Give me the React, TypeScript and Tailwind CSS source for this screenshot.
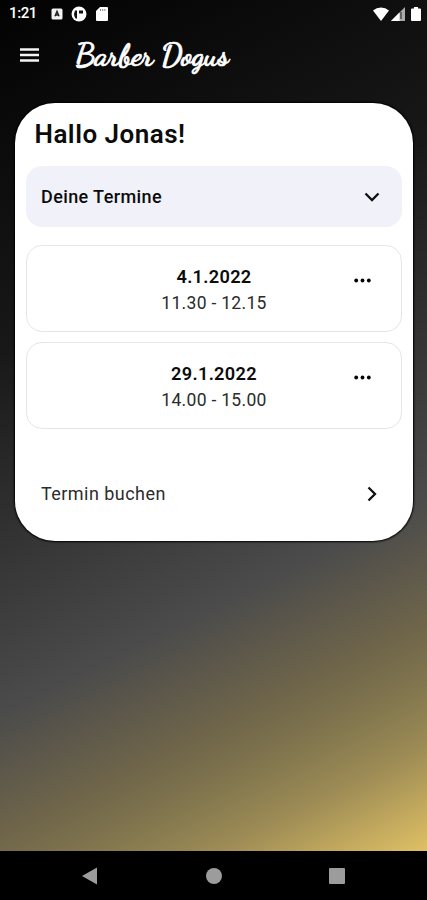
import React, { useState } from "react";

const appointments = [
  { id: 1, date: "4.1.2022", time: "11.30 - 12.15" },
  { id: 2, date: "29.1.2022", time: "14.00 - 15.00" },
];

function StatusBar() {
  return (
    <div className="flex h-[27px] items-center justify-between pl-[9px] pr-[6px] text-white">
      <div className="flex items-center">
        <span className="w-[42px] text-[15px] font-medium leading-none tracking-[-0.4px]">1:21</span>
        <svg className="h-3 w-3" viewBox="0 0 12 12">
          <rect x="0.5" y="0.5" width="11" height="11" rx="1.5" fill="#f2f2f2" />
          <path d="M4 8.300 6 3.500l2 4.800M4.400 7h3.200" fill="none" stroke="#222" strokeWidth="1.500" />
        </svg>
        <svg className="ml-[8px] h-4 w-4" viewBox="0 0 16 16">
          <circle cx="8" cy="8" r="7.500" fill="#fff" />
          <path d="M4 4.500h2v8H4.500Q3 10.500 3 8z" fill="#111" />
          <path d="M8 4.500h4v3H8z" fill="#111" />
        </svg>
        <svg className="ml-[9px] h-[14px] w-3" viewBox="0 0 12 14">
          <path d="M4 0h7q1 0 1 1v12q0 1-1 1H1q-1 0-1-1V4z" fill="#fff" />
          <path d="M4.500 2v2M6.700 2v2M8.900 2v2" stroke="#777" strokeWidth="0.900" />
        </svg>
      </div>
      <div className="flex items-center">
        <svg className="h-[14px] w-[16px]" viewBox="0 0 16 14">
          <path d="M8 14 0 3.600Q3.500 0.500 8 0.500t8 3.100z" fill="#fff" />
        </svg>
        <svg className="ml-[2px] h-[14px] w-[14px]" viewBox="0 0 14 14">
          <path d="M0 14 14 0v14z" fill="#aaa" />
          <path d="M0 14 8.500 5.500V14z" fill="#fff" />
          <path d="M10 5v7" stroke="#333" strokeWidth="1.200" />
        </svg>
        <svg className="ml-[6px] h-[14px] w-[10px]" viewBox="0 0 10 14">
          <path d="M3 0h4v1.500h2q1 0 1 1V13q0 1-1 1H1q-1 0-1-1V2.500q0-1 1-1h2z" fill="#fff" />
        </svg>
      </div>
    </div>
  );
}

function Header() {
  return (
    <header className="flex h-[60px] items-center pb-1 pl-5 text-white">
      <button type="button" aria-label="Menu">
        <svg className="h-[14px] w-[19px]" viewBox="0 0 19 14">
          <path d="M0 1.500h19M0 7h19M0 12.500h19" stroke="#f4f4f4" strokeWidth="2.300" />
        </svg>
      </button>
      <h1 className="ml-9 whitespace-nowrap font-['Dancing_Script',cursive] text-[31px] font-bold leading-none tracking-[-0.3px] [-webkit-text-stroke:0.700px_white]">
        Barber Dogus
      </h1>
    </header>
  );
}

function Appointment({ date, time }: { date: string; time: string }) {
  return (
    <div className="grid h-[87px] grid-cols-[1fr_auto_1fr] rounded-[16px] border border-[#e6e6e8] pt-[17px] text-center">
      <span />
      <div className="pl-px">
        <p className="text-[18.200px] font-semibold leading-[27px] tracking-[0.300px]">{date}</p>
        <p className="text-[17.500px] leading-[26px] tracking-[0.300px] text-[#2b2b2b]">{time}</p>
      </div>
      <button type="button" aria-label="Optionen" className="mr-[30px] mt-[15px] h-[5px] w-[17px] justify-self-end">
        <svg className="h-[5px] w-[17px]" viewBox="0 0 17 5">
          <circle cx="2.200" cy="2.500" r="1.900" />
          <circle cx="8.500" cy="2.500" r="1.900" />
          <circle cx="14.800" cy="2.500" r="1.900" />
        </svg>
      </button>
    </div>
  );
}

function App() {
  const [open, setOpen] = useState(true);

  return (
    <div className="flex h-[900px] w-full flex-col bg-black font-['Roboto',sans-serif] text-[#0c0c0c]">
      <div className="flex-1 bg-[linear-gradient(153.400deg,#020202_0%,#181818_33%,#4b4b4b_67%,#70664a_79%,#85794f_85%,#9c8b55_90%,#dfc065_100%)]">
        <StatusBar />
        <Header />
        <main className="mx-[14.500px] mt-[16px] h-[438px] rounded-[40px] bg-white px-[11px] pt-[15px] shadow-[0_0_2px_1px_#000000]">
          <h2 className="pl-[9px] text-[26px] font-semibold leading-8 tracking-[0.500px]">Hallo Jonas!</h2>
          <button
            type="button"
            onClick={() => setOpen(!open)}
            className="mt-[16px] flex h-[61px] w-full items-center justify-between rounded-[16px] bg-[#f1f2f9] pl-[15.500px] pr-[22px] text-[18px] font-medium tracking-[0.400px]"
          >
            Deine Termine
            <svg className="h-[10px] w-4" viewBox="0 0 16 10">
              <path d="m1.500 1.500 6.500 6.500 6.500-6.500" fill="none" stroke="#111" strokeWidth="2.300" />
            </svg>
          </button>
          {open && (
            <div className="mt-[18px] flex flex-col gap-[10px]">
              {appointments.map((a) => (
                <Appointment key={a.id} date={a.date} time={a.time} />
              ))}
            </div>
          )}
          <button
            type="button"
            className="mt-[34px] flex h-[61px] w-full items-center justify-between pl-[15.500px] pr-[25px] text-[18px] tracking-[0.450px] text-[#2b2b2b]"
          >
            Termin buchen
            <svg className="h-4 w-[10px]" viewBox="0 0 10 16">
              <path d="m1.500 1.500 6.500 6.500-6.500 6.500" fill="none" stroke="#111" strokeWidth="2.300" />
            </svg>
          </button>
        </main>
      </div>
      <nav className="flex h-[49px] items-center pl-[82px]">
        <svg className="h-[18px] w-[15px]" viewBox="0 0 15 18">
          <path d="M0 9 15 0.500v17z" fill="#9c9c9c" />
        </svg>
        <div className="ml-[109px] h-4 w-4 rounded-full bg-[#9c9c9c]" />
        <div className="ml-[107px] h-4 w-4 rounded-[1px] bg-[#9c9c9c]" />
      </nav>
    </div>
  );
}

export default App;
